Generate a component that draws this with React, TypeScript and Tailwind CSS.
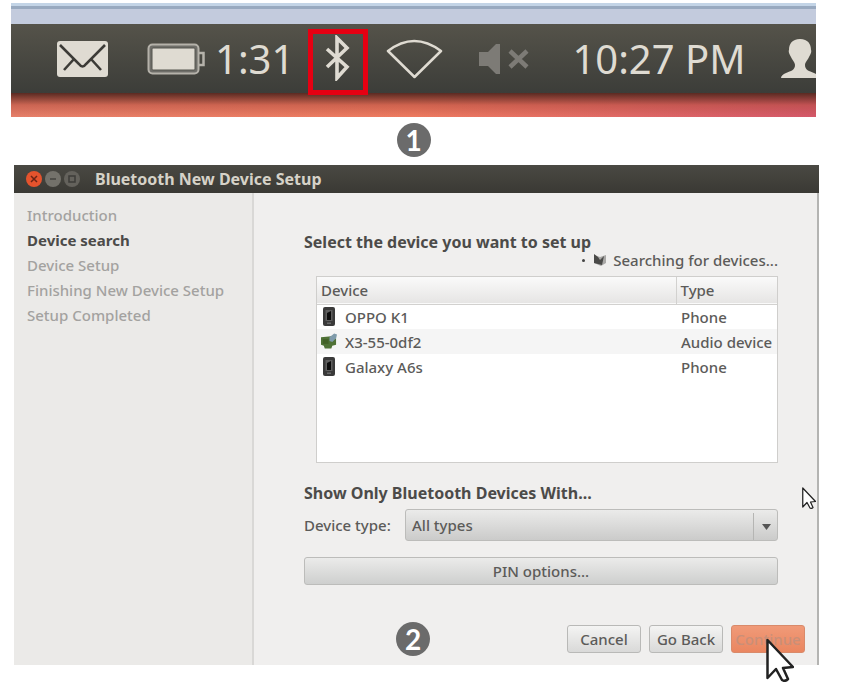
import React, { useState } from 'react';

interface Device {
  name: string;
  type: string;
  kind: 'phone' | 'audio';
}

const STEPS = ['Introduction', 'Device search', 'Device Setup', 'Finishing New Device Setup', 'Setup Completed'];
const ACTIVE_STEP = 'Device search';

const DEVICES: Device[] = [
  { name: 'OPPO K1', type: 'Phone', kind: 'phone' },
  { name: 'X3-55-0df2', type: 'Audio device', kind: 'audio' },
  { name: 'Galaxy A6s', type: 'Phone', kind: 'phone' },
];

const StepBadge: React.FC<{ n: number }> = ({ n }) => (
  <span className="flex h-[34px] w-[34px] shrink-0 items-center justify-center rounded-full bg-[#6b6b6b] text-[28px] leading-[34px] font-bold text-white font-['Lato',sans-serif]">
    {n}
  </span>
);

const MailIcon = () => (
  <svg className="h-[36px] w-[51px]" viewBox="0 0 51 36" fill="none">
    <rect width="51" height="36" rx="3" fill="#dfdbd2" />
    <path d="M3 4 L22 23 Q25.500 28 29 23 L48 4 M7 29 L17 18 M44 29 L34 18" stroke="#3c3b37" strokeWidth="2.600" />
  </svg>
);

const BatteryIcon = () => (
  <svg className="h-[32px] w-[58px]" viewBox="0 0 58 32" fill="none">
    <rect x="1.500" y="1.500" width="50" height="29" rx="4" fill="#6f6e69" stroke="#b5b2aa" strokeWidth="2" />
    <rect x="5" y="5" width="43" height="22" rx="1" fill="#dfdbd2" stroke="#55544f" strokeWidth="1" />
    <path d="M52 10 H56.500 V22 H52" stroke="#b5b2aa" strokeWidth="2.500" />
  </svg>
);

const BluetoothIcon = () => (
  <svg className="h-[46px] w-[26px]" viewBox="0 0 26 46" fill="none">
    <path d="M2 14 L22 32 L12 43 V3 L22 13 L2 32" stroke="#dfdbd2" strokeWidth="3.600" />
  </svg>
);

const WifiIcon = () => (
  <svg className="h-[40px] w-[57px]" viewBox="0 0 57 40" fill="none">
    <path d="M2 12 Q28 -8 55 12 L28.500 38 Z" stroke="#dfdbd2" strokeWidth="2.500" strokeLinejoin="round" />
  </svg>
);

const MutedIcon = () => (
  <svg className="h-[32px] w-[50px]" viewBox="0 0 50 32" fill="none">
    <path d="M0 9 H9 L17 1 H21 V31 H17 L9 23 H0 Z" fill="#7d7b76" />
    <path d="M31 8 L48 24 M48 8 L31 24" stroke="#7d7b76" strokeWidth="4.500" />
  </svg>
);

const UserIcon = () => (
  <svg className="h-[40px] w-[38px] shrink-0" viewBox="0 0 38 40">
    <path
      d="M19 0 C11 0 8 5 8 11 C7 13 9 16 10 18 C11 21 14 23 14 26 C14 31 10 32 5 34 C2 35 0 37 0 39 H38 C38 37 36 35 33 34 C28 32 24 31 24 26 C24 23 27 21 28 18 C29 16 31 13 30 11 C30 5 27 0 19 0 Z"
      fill="#dfdbd2"
    />
  </svg>
);

const PhoneIcon = () => (
  <svg className="h-[19px] w-[12px]" viewBox="0 0 12 19">
    <rect width="12" height="19" rx="2" fill="#3a3a3a" />
    <rect x="2.500" y="3" width="7" height="11" fill="#5f5f5f" />
    <path d="M4 6 L8 4 V13 H4 Z" fill="#0c0c0c" />
    <rect x="4" y="15.500" width="4" height="1.500" fill="#6a6a6a" />
  </svg>
);

const AudioCardIcon = () => (
  <svg className="h-[17px] w-[17px]" viewBox="0 0 17 17">
    <path d="M0 4 L11 3 L16 2 V12 L12 13 L11 16 L4 16 L3 13 L0 12 Z" fill="#4f7236" />
    <path d="M9 4 L14 0 L17 1 L16 5 L12 9 L9 8 Z" fill="#7f9bab" />
    <path d="M2 6 H8 V11 H2 Z" fill="#426128" />
  </svg>
);

const SpinnerIcon = () => (
  <svg className="h-[14px] w-[14px]" viewBox="0 0 14 14">
    <path d="M1 2 L7 4 L13 2 V10 L8 13 L1 10 Z" fill="#aaa9a7" />
    <path d="M1 1 L5 4 L7 7 L11 3 L9 12 L1 10 Z" fill="#4a4a48" />
  </svg>
);

const Cursor: React.FC<{ className: string }> = ({ className }) => (
  <svg className={className} viewBox="0 0 28 44" preserveAspectRatio="none">
    <path
      d="M1.500 2 V40 L10 31 L16 42 Q19 44 22 41 L17 30 L27 29 Z"
      fill="#fff"
      stroke="#222"
      strokeWidth="2.500"
      strokeLinejoin="round"
    />
  </svg>
);

const TopPanel = () => (
  <section className="mr-[30px] ml-[11px] overflow-hidden" aria-label="System panel">
    <div className="h-[21px] border-t-3 border-[#c3d4e6] bg-[#c3cbdd]">
      <div className="h-[3px] bg-[#98a9bf]" />
    </div>
    <div className="flex h-[69px] items-center bg-linear-to-b from-[#55534a] to-[#3c3d39] pl-[46px] text-[40px] leading-[69px] text-[#dfdbd2]">
      <MailIcon />
      <div className="ml-[39px] flex shrink-0 items-center gap-[10px]">
        <BatteryIcon />
        <span>1:31</span>
      </div>
      <button
        type="button"
        aria-label="Bluetooth"
        className="relative z-10 mt-[7px] ml-[14px] flex h-[66px] w-[60px] shrink-0 items-center justify-center border-5 border-[#e60012] pb-2"
      >
        <BluetoothIcon />
      </button>
      <div className="ml-[18px] shrink-0">
        <WifiIcon />
      </div>
      <div className="ml-9 shrink-0">
        <MutedIcon />
      </div>
      <span className="ml-[43px] shrink-0 whitespace-nowrap">10:27 PM</span>
      <div className="ml-auto w-[35px] shrink-0 overflow-hidden">
        <UserIcon />
      </div>
    </div>
    <div className="h-6 bg-linear-to-r from-[#e6806a] via-[#ee7b60] to-[#d4586a]">
      <div className="h-full bg-linear-to-b from-[#5a2a22] via-[#b04a3c]/50 to-transparent" />
    </div>
  </section>
);

const TitleBar = () => (
  <header className="flex h-[28px] items-center bg-linear-to-b from-[#4a4943] to-[#3a3934] pl-3">
    <div className="flex gap-[3px]">
      <button type="button" aria-label="Close" className="flex h-4 w-4 items-center justify-center rounded-full bg-[#e5532d]">
        <svg className="h-2 w-2" viewBox="0 0 8 8" stroke="#6b2415" strokeWidth="1.500">
          <path d="M1 1 L7 7 M7 1 L1 7" />
        </svg>
      </button>
      <button type="button" aria-label="Minimize" className="flex h-4 w-4 items-center justify-center rounded-full bg-[#74726b]">
        <svg className="h-2 w-2" viewBox="0 0 8 8" stroke="#45443f" strokeWidth="1.500">
          <path d="M1 4 H7" />
        </svg>
      </button>
      <button type="button" aria-label="Maximize" className="flex h-4 w-4 items-center justify-center rounded-full bg-[#64625c]">
        <svg className="h-2 w-2" viewBox="0 0 8 8" fill="none" stroke="#3d3c38" strokeWidth="1.500">
          <rect x="1" y="1" width="6" height="6" />
        </svg>
      </button>
    </div>
    <h1 className="ml-[15px] text-[16px] leading-6 font-bold text-[#d6d2c8]">Bluetooth New Device Setup</h1>
  </header>
);

const buttonClass =
  'h-[28px] w-[74px] rounded-[3px] border border-[#b9b9b7] bg-linear-to-b from-[#f4f4f3] to-[#d9d9d8] text-[15px] leading-5';

const App: React.FC = () => {
  const [deviceType, setDeviceType] = useState('all');

  return (
    <main className="min-h-screen bg-white pt-[3px] font-['Noto_Sans','Open_Sans',sans-serif]">
      <TopPanel />
      <div className="mr-[30px] ml-[11px] flex h-[48px] items-center justify-center pb-0.5">
        <StepBadge n={1} />
      </div>

      <section className="relative mr-[27px] ml-[14px]">
        <TitleBar />
        <div className="flex border-r-2 border-[#b4b4b2] bg-[#f0efee] text-[15px] leading-5 font-medium text-[#5c5b59]">
          {/* Wizard steps */}
          <ol className="w-[240px] shrink-0 border-r-2 border-[#d9d8d6] bg-[#ebeae8] pt-[10px] pl-[13px] leading-[25px] text-[#a3a2a0]">
            {STEPS.map((step) => (
              <li key={step} className={step === ACTIVE_STEP ? 'font-bold text-[#4c4b49]' : ''}>
                {step}
              </li>
            ))}
          </ol>

          {/* Current page */}
          <div className="min-w-0 flex-1 pt-[39px] pb-[9px]">
            <div className="pr-[39px] pl-[50px]">
              <h2 className="text-[16px] font-bold text-[#4c4b49]">Select the device you want to set up</h2>
              <p className="-mt-0.5 flex items-center justify-end">
                <span className="mr-2 h-[3px] w-[3px] rounded-full bg-[#444]" />
                <SpinnerIcon />
                <span className="ml-1.5">Searching for devices...</span>
              </p>

              <div className="mt-[6px] ml-3 h-[187px] border border-[#cfcecc] bg-white">
                <table className="w-full table-fixed border-collapse text-left">
                  <thead>
                    <tr className="h-[27px] border-b border-[#d2d1cf] bg-linear-to-b from-[#fafafa] to-[#e6e5e4]">
                      <th className="p-0 pl-1 font-medium">Device</th>
                      <th className="w-[101px] border-l border-[#d2d1cf] p-0 pl-1 font-medium">Type</th>
                    </tr>
                  </thead>
                  <tbody>
                    {DEVICES.map((device) => (
                      <tr key={device.name} className="h-[25px] even:bg-[#f5f5f5]">
                        <td className="p-0 pl-1">
                          <div className="flex items-center">
                            <span className="mr-2 flex w-4 justify-center">
                              {device.kind === 'phone' ? <PhoneIcon /> : <AudioCardIcon />}
                            </span>
                            {device.name}
                          </div>
                        </td>
                        <td className="p-0 pl-[5px] whitespace-nowrap">{device.type}</td>
                      </tr>
                    ))}
                  </tbody>
                </table>
              </div>

              <h2 className="mt-5 text-[16px] font-bold text-[#4c4b49]">Show Only Bluetooth Devices With...</h2>
              <div className="mt-[6px] flex items-center">
                <label htmlFor="device-type" className="w-[101px] shrink-0">
                  Device type:
                </label>
                <div className="relative flex-1">
                  <select
                    id="device-type"
                    value={deviceType}
                    onChange={(e) => setDeviceType(e.target.value)}
                    className="block h-8 w-full appearance-none rounded-[3px] border border-[#bcbcba] bg-linear-to-b from-[#ebebea] to-[#cbcbca] pl-[6px]"
                  >
                    <option value="all">All types</option>
                    <option value="phone">Phone</option>
                    <option value="audio">Audio device</option>
                  </select>
                  <span className="pointer-events-none absolute top-1 right-0 bottom-px flex w-[25px] items-center justify-center border-l border-[#b5b5b3]">
                    <svg className="h-[6px] w-[9px]" viewBox="0 0 9 6" fill="#555">
                      <path d="M0 0 H9 L4.500 6 Z" />
                    </svg>
                  </span>
                </div>
              </div>
              <button
                type="button"
                className="mt-4 block h-[28px] w-full rounded-[3px] border border-[#bcbcba] bg-linear-to-b from-[#ebebea] to-[#cecfce]"
              >
                PIN options...
              </button>
            </div>

            <div className="mt-[37px] flex items-center pr-3 pl-[142px]">
              <StepBadge n={2} />
              <div className="ml-auto flex gap-2">
                <button type="button" className={buttonClass}>
                  Cancel
                </button>
                <button type="button" className={buttonClass}>
                  Go Back
                </button>
                <button
                  type="button"
                  className="h-[28px] w-[74px] rounded-[3px] border border-[#d98a6a] bg-linear-to-b from-[#f09a78] to-[#ea8660] text-[15px] leading-5 text-[#c98f78]"
                >
                  Continue
                </button>
              </div>
            </div>
          </div>
        </div>

        {/* Mouse pointers */}
        <Cursor className="absolute top-[322px] right-[3px] h-[22px] w-[14px]" />
        <Cursor className="absolute right-[25px] -bottom-[17px] h-[44px] w-[28px]" />
      </section>
    </main>
  );
};

export default App;
